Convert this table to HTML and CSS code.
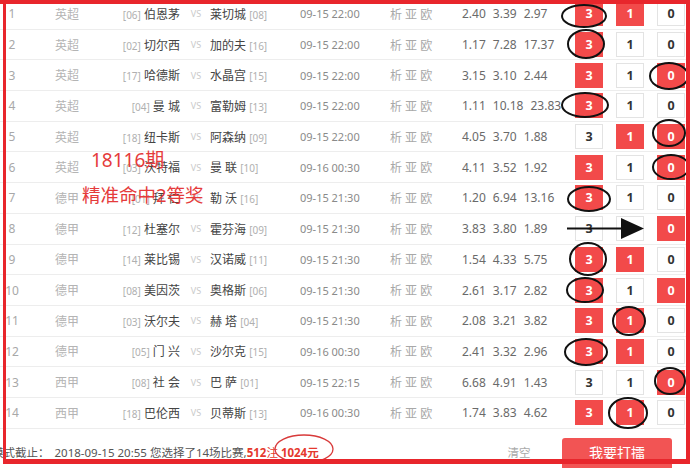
FILE: index.html
```html
<!DOCTYPE html>
<html lang="zh-CN">
<head>
<meta charset="utf-8">
<title>胜负彩</title>
<link rel="stylesheet" href="styles.css">
</head>
<body>
<div class="page">
  <div class="list">
    <div class="row"><span class="num">1</span><span class="lg">英超</span><span class="home"><i>[06]</i> 伯恩茅</span><span class="vs">VS</span><span class="away">莱切城 <i>[08]</i></span><span class="time">09-15 22:00</span><span class="ana">析 亚 欧</span><span class="odds"><span>2.40</span><span>3.39</span><span>2.97</span></span><span class="picks"><b class="on">3</b><b class="on">1</b><b>0</b></span></div>
    <div class="row"><span class="num">2</span><span class="lg">英超</span><span class="home"><i>[02]</i> 切尔西</span><span class="vs">VS</span><span class="away">加的夫 <i>[16]</i></span><span class="time">09-15 22:00</span><span class="ana">析 亚 欧</span><span class="odds"><span>1.17</span><span>7.28</span><span>17.37</span></span><span class="picks"><b class="on">3</b><b>1</b><b>0</b></span></div>
    <div class="row"><span class="num">3</span><span class="lg">英超</span><span class="home"><i>[17]</i> 哈德斯</span><span class="vs">VS</span><span class="away">水晶宫 <i>[15]</i></span><span class="time">09-15 22:00</span><span class="ana">析 亚 欧</span><span class="odds"><span>3.15</span><span>3.10</span><span>2.44</span></span><span class="picks"><b class="on">3</b><b>1</b><b class="on">0</b></span></div>
    <div class="row"><span class="num">4</span><span class="lg">英超</span><span class="home"><i>[04]</i> 曼 城</span><span class="vs">VS</span><span class="away">富勒姆 <i>[13]</i></span><span class="time">09-15 22:00</span><span class="ana">析 亚 欧</span><span class="odds"><span>1.11</span><span>10.18</span><span>23.83</span></span><span class="picks"><b class="on">3</b><b>1</b><b>0</b></span></div>
    <div class="row"><span class="num">5</span><span class="lg">英超</span><span class="home"><i>[18]</i> 纽卡斯</span><span class="vs">VS</span><span class="away">阿森纳 <i>[09]</i></span><span class="time">09-15 22:00</span><span class="ana">析 亚 欧</span><span class="odds"><span>4.05</span><span>3.70</span><span>1.88</span></span><span class="picks"><b>3</b><b class="on">1</b><b class="on">0</b></span></div>
    <div class="row"><span class="num">6</span><span class="lg">英超</span><span class="home"><i>[03]</i> 沃特福</span><span class="vs">VS</span><span class="away">曼 联 <i>[10]</i></span><span class="time">09-16 00:30</span><span class="ana">析 亚 欧</span><span class="odds"><span>4.11</span><span>3.52</span><span>1.92</span></span><span class="picks"><b class="on">3</b><b>1</b><b class="on">0</b></span></div>
    <div class="row"><span class="num">7</span><span class="lg">德甲</span><span class="home"><i>[01]</i> 拜 仁</span><span class="vs">VS</span><span class="away">勒 沃 <i>[16]</i></span><span class="time">09-15 21:30</span><span class="ana">析 亚 欧</span><span class="odds"><span>1.20</span><span>6.94</span><span>13.16</span></span><span class="picks"><b class="on">3</b><b>1</b><b>0</b></span></div>
    <div class="row"><span class="num">8</span><span class="lg">德甲</span><span class="home"><i>[12]</i> 杜塞尔</span><span class="vs">VS</span><span class="away">霍芬海 <i>[09]</i></span><span class="time">09-15 21:30</span><span class="ana">析 亚 欧</span><span class="odds"><span>3.83</span><span>3.80</span><span>1.89</span></span><span class="picks"><b>3</b><b>1</b><b class="on">0</b></span></div>
    <div class="row"><span class="num">9</span><span class="lg">德甲</span><span class="home"><i>[14]</i> 莱比锡</span><span class="vs">VS</span><span class="away">汉诺威 <i>[11]</i></span><span class="time">09-15 21:30</span><span class="ana">析 亚 欧</span><span class="odds"><span>1.54</span><span>4.33</span><span>5.75</span></span><span class="picks"><b class="on">3</b><b class="on">1</b><b>0</b></span></div>
    <div class="row"><span class="num">10</span><span class="lg">德甲</span><span class="home"><i>[08]</i> 美因茨</span><span class="vs">VS</span><span class="away">奥格斯 <i>[06]</i></span><span class="time">09-15 21:30</span><span class="ana">析 亚 欧</span><span class="odds"><span>2.61</span><span>3.17</span><span>2.82</span></span><span class="picks"><b class="on">3</b><b>1</b><b class="on">0</b></span></div>
    <div class="row"><span class="num">11</span><span class="lg">德甲</span><span class="home"><i>[03]</i> 沃尔夫</span><span class="vs">VS</span><span class="away">赫 塔 <i>[04]</i></span><span class="time">09-15 21:30</span><span class="ana">析 亚 欧</span><span class="odds"><span>2.08</span><span>3.21</span><span>3.82</span></span><span class="picks"><b class="on">3</b><b class="on">1</b><b>0</b></span></div>
    <div class="row"><span class="num">12</span><span class="lg">德甲</span><span class="home"><i>[05]</i> 门 兴</span><span class="vs">VS</span><span class="away">沙尔克 <i>[15]</i></span><span class="time">09-16 00:30</span><span class="ana">析 亚 欧</span><span class="odds"><span>2.41</span><span>3.32</span><span>2.96</span></span><span class="picks"><b class="on">3</b><b class="on">1</b><b>0</b></span></div>
    <div class="row"><span class="num">13</span><span class="lg">西甲</span><span class="home"><i>[08]</i> 社 会</span><span class="vs">VS</span><span class="away">巴 萨 <i>[01]</i></span><span class="time">09-15 22:15</span><span class="ana">析 亚 欧</span><span class="odds"><span>6.68</span><span>4.91</span><span>1.43</span></span><span class="picks"><b>3</b><b>1</b><b class="on">0</b></span></div>
    <div class="row"><span class="num">14</span><span class="lg">西甲</span><span class="home"><i>[18]</i> 巴伦西</span><span class="vs">VS</span><span class="away">贝蒂斯 <i>[13]</i></span><span class="time">09-16 00:30</span><span class="ana">析 亚 欧</span><span class="odds"><span>1.74</span><span>3.83</span><span>4.62</span></span><span class="picks"><b class="on">3</b><b class="on">1</b><b>0</b></span></div>
  </div>
  <div class="footer">
    <span class="info">模式截止：<span class="date">2018-09-15 20:55</span> 您选择了14场比赛,<em>512</em><span class="red">注</span> <em>1024元</em></span>
    <span class="clear">清空</span>
    <span class="go">我要打擂</span>
  </div>

  <div class="note note1">18116期</div>
  <div class="note note2">精准命中2等奖</div>

  <svg class="marks" width="690" height="468" viewBox="0 0 690 468">
    <g fill="none" stroke="#111" stroke-width="2">
      <ellipse cx="584" cy="16" rx="22" ry="11"/>
      <ellipse cx="586" cy="44" rx="18" ry="14"/>
      <ellipse cx="669" cy="76" rx="19" ry="13"/>
      <ellipse cx="585" cy="105" rx="23" ry="12"/>
      <ellipse cx="669" cy="133" rx="16" ry="13"/>
      <ellipse cx="671" cy="167" rx="18" ry="12"/>
      <ellipse cx="589" cy="199" rx="21" ry="12"/>
      <ellipse cx="588" cy="259" rx="18" ry="16"/>
      <ellipse cx="585" cy="290" rx="18" ry="12"/>
      <ellipse cx="629" cy="321" rx="16" ry="14"/>
      <ellipse cx="586" cy="352" rx="21" ry="13"/>
      <ellipse cx="670" cy="381" rx="15" ry="13"/>
      <ellipse cx="628" cy="413" rx="19" ry="15"/>
      <line x1="567" y1="228.5" x2="626" y2="228.5"/>
    </g>
    <polygon points="621,218 644,228.5 621,239" fill="#111"/>
    <ellipse cx="304" cy="449" rx="29" ry="14" fill="none" stroke="#d83a3a" stroke-width="1.3"/>
    <g fill="#e8262c">
      <rect x="0" y="0" width="690" height="4"/>
      <rect x="3" y="0" width="3" height="464"/>
      <rect x="686" y="0" width="4" height="464"/>
      <rect x="3" y="459" width="687" height="5"/>
    </g>
  </svg>
</div>
</body>
</html>
```

FILE: styles.css
```css
* {
  box-sizing: border-box;
  margin: 0;
  padding: 0;
}

html, body {
  width: 690px;
  height: 468px;
  overflow: hidden;
  background: #fff;
}

body {
  font-family: "Noto Sans", "Noto Sans CJK SC", sans-serif;
  color: #444;
}

.page {
  position: relative;
  width: 690px;
  height: 468px;
  overflow: hidden;
}

.list {
  margin-top: -1px;
}

.row {
  display: grid;
  grid-template-columns: 24px 86px 75px 22px 93px 90px 72px 113px 110px;
  align-items: center;
  height: 30.7px;
  border-bottom: 1px solid #ededed;
  font-size: 12px;
  white-space: nowrap;
}

.row i {
  font-style: normal;
  font-size: 10px;
  color: #b0b0b0;
}

.num {
  text-align: center;
  color: #a8a8a8;
}

.lg {
  text-align: center;
  color: #b4b4b4;
}

.home {
  text-align: right;
  padding-right: 5px;
  color: #444;
}

.vs {
  text-align: center;
  font-size: 9px;
  color: #cacaca;
}

.away {
  padding-left: 3px;
  color: #444;
}

.time {
  font-size: 11px;
  color: #8a8a8a;
}

.ana {
  color: #a8a8a8;
}

.odds {
  display: flex;
  gap: 7px;
  color: #6a6a6a;
}

.picks {
  display: flex;
  gap: 13px;
}

.picks b {
  width: 28px;
  height: 25px;
  display: flex;
  align-items: center;
  justify-content: center;
  border: 1px solid #e3e3e3;
  background: #fff;
  color: #333;
  font-size: 12.5px;
  font-weight: bold;
}

.picks b.on {
  background: #f24a4a;
  border-color: #f24a4a;
  color: #fff;
}

.footer {
  display: flex;
  align-items: flex-start;
  padding-top: 9px;
  font-size: 11.5px;
  color: #555;
  white-space: nowrap;
}

.info {
  margin-left: -8px;
  line-height: 30px;
}

.date {
  margin-left: 5px;
}

.info em {
  font-style: normal;
  font-weight: bold;
  color: #e5392e;
}

.info .red {
  color: #e5392e;
}

.clear {
  margin-left: auto;
  width: 48px;
  text-align: center;
  line-height: 30px;
  color: #aaa;
}

.go {
  margin-left: 19px;
  margin-right: 18px;
  width: 110px;
  height: 34px;
  padding-bottom: 6px;
  display: flex;
  align-items: center;
  justify-content: center;
  background: #f25454;
  color: #fff;
  font-size: 14px;
  border-radius: 3px 3px 0 0;
}

.note {
  position: absolute;
  line-height: 1;
  color: #e53b3b;
  white-space: nowrap;
}

.note1 {
  left: 91px;
  top: 151px;
  font-size: 19px;
}

.note2 {
  left: 82px;
  top: 186px;
  font-size: 18.5px;
}

.marks {
  position: absolute;
  left: 0;
  top: 0;
  pointer-events: none;
}
```
